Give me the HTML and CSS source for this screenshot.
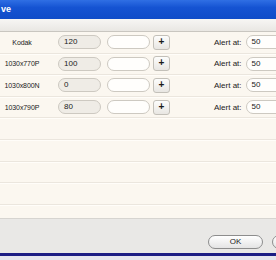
FILE: index.html
```html
<!DOCTYPE html>
<html lang="en">
<head>
    <meta charset="UTF-8">
    <title>Save</title>
    <link rel="stylesheet" href="styles.css">
</head>
<body>
    <div class="window">
        <div class="titlebar">ve</div>
        <div class="toolbar"></div>

        <div class="list">
            <div class="row">
                <div class="name">Kodak</div>
                <div class="field qty">120</div>
                <div class="field"></div>
                <div class="plus">+</div>
                <div class="alert-label">Alert at:</div>
                <div class="field alert">50</div>
            </div>
            <div class="row">
                <div class="name">1030x770P</div>
                <div class="field qty">100</div>
                <div class="field"></div>
                <div class="plus">+</div>
                <div class="alert-label">Alert at:</div>
                <div class="field alert">50</div>
            </div>
            <div class="row">
                <div class="name">1030x800N</div>
                <div class="field qty">0</div>
                <div class="field"></div>
                <div class="plus">+</div>
                <div class="alert-label">Alert at:</div>
                <div class="field alert">50</div>
            </div>
            <div class="row">
                <div class="name">1030x790P</div>
                <div class="field qty">80</div>
                <div class="field"></div>
                <div class="plus">+</div>
                <div class="alert-label">Alert at:</div>
                <div class="field alert">50</div>
            </div>
            <div class="row"></div>
            <div class="row"></div>
            <div class="row"></div>
            <div class="row"></div>
            <div class="row last"></div>
        </div>

        <div class="footer">
            <div class="btn">OK</div>
            <div class="btn"></div>
        </div>
        <div class="bottom-edge"></div>
    </div>
</body>
</html>
```

FILE: styles.css
```css
body {
    margin: 0;
    width: 276px;
    height: 260px;
    overflow: hidden;
    font-family: "Liberation Sans", Arial, sans-serif;
    font-size: 8px;
    color: #1a1a1a;
    background: #e6e6ee;
}
.window {
    display: flex;
    flex-direction: column;
    height: 260px;
}
.titlebar {
    height: 19px;
    line-height: 19px;
    flex: none;
    background: linear-gradient(#2f6fe4, #1553d2 40%, #0f4cc8);
    color: white;
    font-weight: bold;
    font-size: 9px;
    padding-left: 1px;
}
.toolbar {
    height: 12px;
    flex: none;
    background: linear-gradient(#f7f6f4, #e9e7e3);
    border-bottom: 1px solid #c9c6c0;
}
.list {
    background: #fbf7f0;
    height: 186px;
    flex: none;
    overflow: hidden;
}
.row {
    box-sizing: border-box;
    height: 21.6px;
    border-bottom: 1px solid #ebe6de;
    box-shadow: 0 1px 0 #fffdf9;
    display: flex;
    align-items: center;
    white-space: nowrap;
}
.row.last {
    border-bottom: none;
    box-shadow: none;
}
.name {
    width: 44px;
    text-align: center;
    font-size: 7px;
    letter-spacing: -0.1px;
    flex: none;
}
.field {
    box-sizing: border-box;
    width: 43px;
    height: 14px;
    line-height: 12px;
    border: 1px solid #cdc9c1;
    border-radius: 7px;
    background: #fffefc;
    padding-left: 5px;
    margin-left: 6px;
    flex: none;
}
.field.qty {
    margin-left: 14px;
    background: #efece6;
}
.plus {
    box-sizing: border-box;
    width: 17px;
    height: 15px;
    margin-left: 3px;
    border: 1px solid #c3c0b9;
    border-radius: 3px;
    background: linear-gradient(#fdfdfc, #e8e6e2);
    text-align: center;
    line-height: 12px;
    font-weight: bold;
    font-size: 10px;
    flex: none;
}
.alert-label {
    margin-left: 44px;
    flex: none;
}
.field.alert {
    margin-left: 4px;
    width: 46px;
}
.footer {
    flex: none;
    height: 35px;
    box-sizing: border-box;
    border-top: 1px solid #d6d4d0;
    background: #e9e8e6;
    display: flex;
    align-items: center;
    padding: 11px 0 0 208px;
    gap: 9px;
    overflow: hidden;
}
.btn {
    box-sizing: border-box;
    width: 55px;
    height: 14px;
    line-height: 12px;
    border: 1px solid #8d8d8d;
    border-radius: 7px;
    background: linear-gradient(#ffffff, #e4e4e4);
    text-align: center;
    flex: none;
}
.bottom-edge {
    flex: none;
    height: 3px;
    background: #1d1d84;
}
```
